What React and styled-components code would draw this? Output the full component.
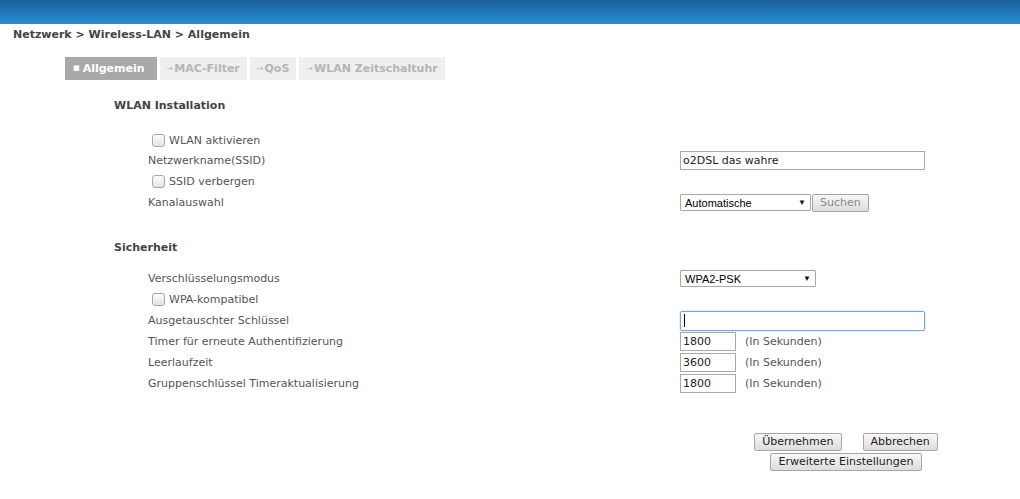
import React from "react";
import styled, { createGlobalStyle } from "styled-components";

const GlobalStyle = createGlobalStyle`
  body {
    margin: 0;
    background: #fff;
    font-family: "DejaVu Sans", Verdana, sans-serif;
    font-size: 11px;
    color: #555;
  }
`;

const TopBar = styled.div`
  height: 24px;
  background: linear-gradient(to bottom, #1c5f9c, #2a8ed0);
`;

const Breadcrumb = styled.div`
  padding: 1px 0 0 13px;
  height: 20px;
  line-height: 20px;
  font-weight: bold;
  font-size: 11px;
  color: #444;
`;

const Tabs = styled.div`
  display: flex;
  gap: 3px;
  margin: 12px 0 0 65px;
`;

const Tab = styled.div`
  height: 23px;
  line-height: 23px;
  padding: ${(p) => (p.$active ? "0 12px 0 8px" : "0 7px")};
  background: ${(p) => (p.$active ? "#a7a9ab" : "#efefef")};
  color: ${(p) => (p.$active ? "#fff" : "#b5b5b5")};
  font-weight: bold;
  font-size: 11px;
  display: flex;
  align-items: center;
  gap: 1px;
`;

const TabMark = styled.span`
  font-size: ${(p) => (p.$dot ? "7px" : "8px")};
  font-weight: normal;
  margin-right: ${(p) => (p.$dot ? "2px" : "0")};
`;

const Section = styled.div`
  padding-left: 114px;
`;

const SectionTitle = styled.div`
  font-weight: bold;
  color: #444;
  height: 20px;
  line-height: 20px;
  margin-top: ${(p) => p.$top}px;
`;

const FormGrid = styled.div`
  display: grid;
  grid-template-columns: 566px 1fr;
  margin-top: ${(p) => p.$top}px;
`;

const Label = styled.div`
  padding-left: ${(p) => (p.$check ? "38px" : "34px")};
  height: ${(p) => p.$h || 21}px;
  display: flex;
  align-items: center;
  gap: 4px;
  color: #555;
`;

const Field = styled.div`
  height: ${(p) => p.$h || 21}px;
  display: flex;
  align-items: center;
  gap: 1px;
`;

const Check = styled.span`
  display: inline-block;
  width: 11px;
  height: 11px;
  border: 1px solid #a8a8a8;
  border-radius: 3px;
  background: linear-gradient(to bottom, #fcfcfc, #e4e4e4);
`;

const TextInput = styled.input`
  box-sizing: border-box;
  width: ${(p) => p.$w}px;
  height: 19px;
  border: 1px solid #a9a9a9;
  border-radius: 0;
  padding: 1px 2px;
  font-family: "DejaVu Sans", Verdana, sans-serif;
  font-size: 11px;
  color: #222;
  outline: none;
  margin: 0;
`;

const Caret = styled.span`
  display: inline-block;
  width: 1px;
  height: 13px;
  background: #000;
`;

const FocusedInput = styled.div`
  box-sizing: border-box;
  width: 245px;
  height: 20px;
  border: 1px solid #7ea6d8;
  box-shadow: 0 0 2px #9ec3ef;
  border-radius: 2px;
  padding: 0 3px;
  display: flex;
  align-items: center;
`;

const SelectBox = styled.div`
  box-sizing: border-box;
  width: ${(p) => p.$w}px;
  height: 17px;
  border: 1px solid #a9a9a9;
  border-radius: 1px;
  background: #fff;
  padding: 0 4px;
  display: flex;
  align-items: center;
  justify-content: space-between;
  font-family: "Liberation Sans", Arial, sans-serif;
  font-size: 11px;
  color: #000;
`;

const Arrow = styled.span`
  font-size: 8px;
  color: #111;
`;

const Unit = styled.span`
  margin-left: 8px;
  color: #555;
`;

const Button = styled.button`
  box-sizing: border-box;
  height: 18px;
  padding: 0 7px;
  border: 1px solid #a6a6a6;
  border-radius: 2px;
  background: linear-gradient(to bottom, #f7f7f7, #dddddd);
  font-family: "DejaVu Sans", Verdana, sans-serif;
  font-size: 11px;
  color: ${(p) => (p.$disabled ? "#8a8a8a" : "#222")};
  line-height: 16px;
  cursor: pointer;
`;

const Actions = styled.div`
  display: flex;
  flex-direction: column;
  align-items: center;
  gap: 2px;
  width: 200px;
  margin: 39px 0 0 746px;
`;

const ActionRow = styled.div`
  display: flex;
  gap: 21px;
`;

const CheckLabel = ({ children, h }) => (
  <Label $check $h={h}>
    <Check />
    {children}
  </Label>
);

export default function App() {
  return (
    <>
      <GlobalStyle />
      <TopBar />
      <Breadcrumb>Netzwerk &gt; Wireless-LAN &gt; Allgemein</Breadcrumb>
      <Tabs>
        <Tab $active>
          <TabMark $dot>■</TabMark>Allgemein
        </Tab>
        <Tab>
          <TabMark>→</TabMark>MAC-Filter
        </Tab>
        <Tab>
          <TabMark>→</TabMark>QoS
        </Tab>
        <Tab>
          <TabMark>→</TabMark>WLAN Zeitschaltuhr
        </Tab>
      </Tabs>

      <Section>
        <SectionTitle $top={16}>WLAN Installation</SectionTitle>
        <FormGrid $top={14}>
          <CheckLabel>WLAN aktivieren</CheckLabel>
          <Field />
          <Label $h={19}>Netzwerkname(SSID)</Label>
          <Field $h={19}>
            <TextInput $w={245} defaultValue="o2DSL das wahre" />
          </Field>
          <CheckLabel h={22}>SSID verbergen</CheckLabel>
          <Field $h={22} />
          <Label>Kanalauswahl</Label>
          <Field>
            <SelectBox $w={131}>
              Automatische <Arrow>▼</Arrow>
            </SelectBox>
            <Button $disabled>Suchen</Button>
          </Field>
        </FormGrid>

        <SectionTitle $top={25}>Sicherheit</SectionTitle>
        <FormGrid $top={10}>
          <Label>Verschlüsselungsmodus</Label>
          <Field>
            <SelectBox $w={136}>
              WPA2-PSK <Arrow>▼</Arrow>
            </SelectBox>
          </Field>
          <CheckLabel>WPA-kompatibel</CheckLabel>
          <Field />
          <Label>Ausgetauschter Schlüssel</Label>
          <Field>
            <FocusedInput>
              <Caret />
            </FocusedInput>
          </Field>
          <Label>Timer für erneute Authentifizierung</Label>
          <Field>
            <TextInput $w={56} defaultValue="1800" />
            <Unit>(In Sekunden)</Unit>
          </Field>
          <Label>Leerlaufzeit</Label>
          <Field>
            <TextInput $w={56} defaultValue="3600" />
            <Unit>(In Sekunden)</Unit>
          </Field>
          <Label>Gruppenschlüssel Timeraktualisierung</Label>
          <Field>
            <TextInput $w={56} defaultValue="1800" />
            <Unit>(In Sekunden)</Unit>
          </Field>
        </FormGrid>
      </Section>

      <Actions>
        <ActionRow>
          <Button>Übernehmen</Button>
          <Button>Abbrechen</Button>
        </ActionRow>
        <Button>Erweiterte Einstellungen</Button>
      </Actions>
    </>
  );
}
